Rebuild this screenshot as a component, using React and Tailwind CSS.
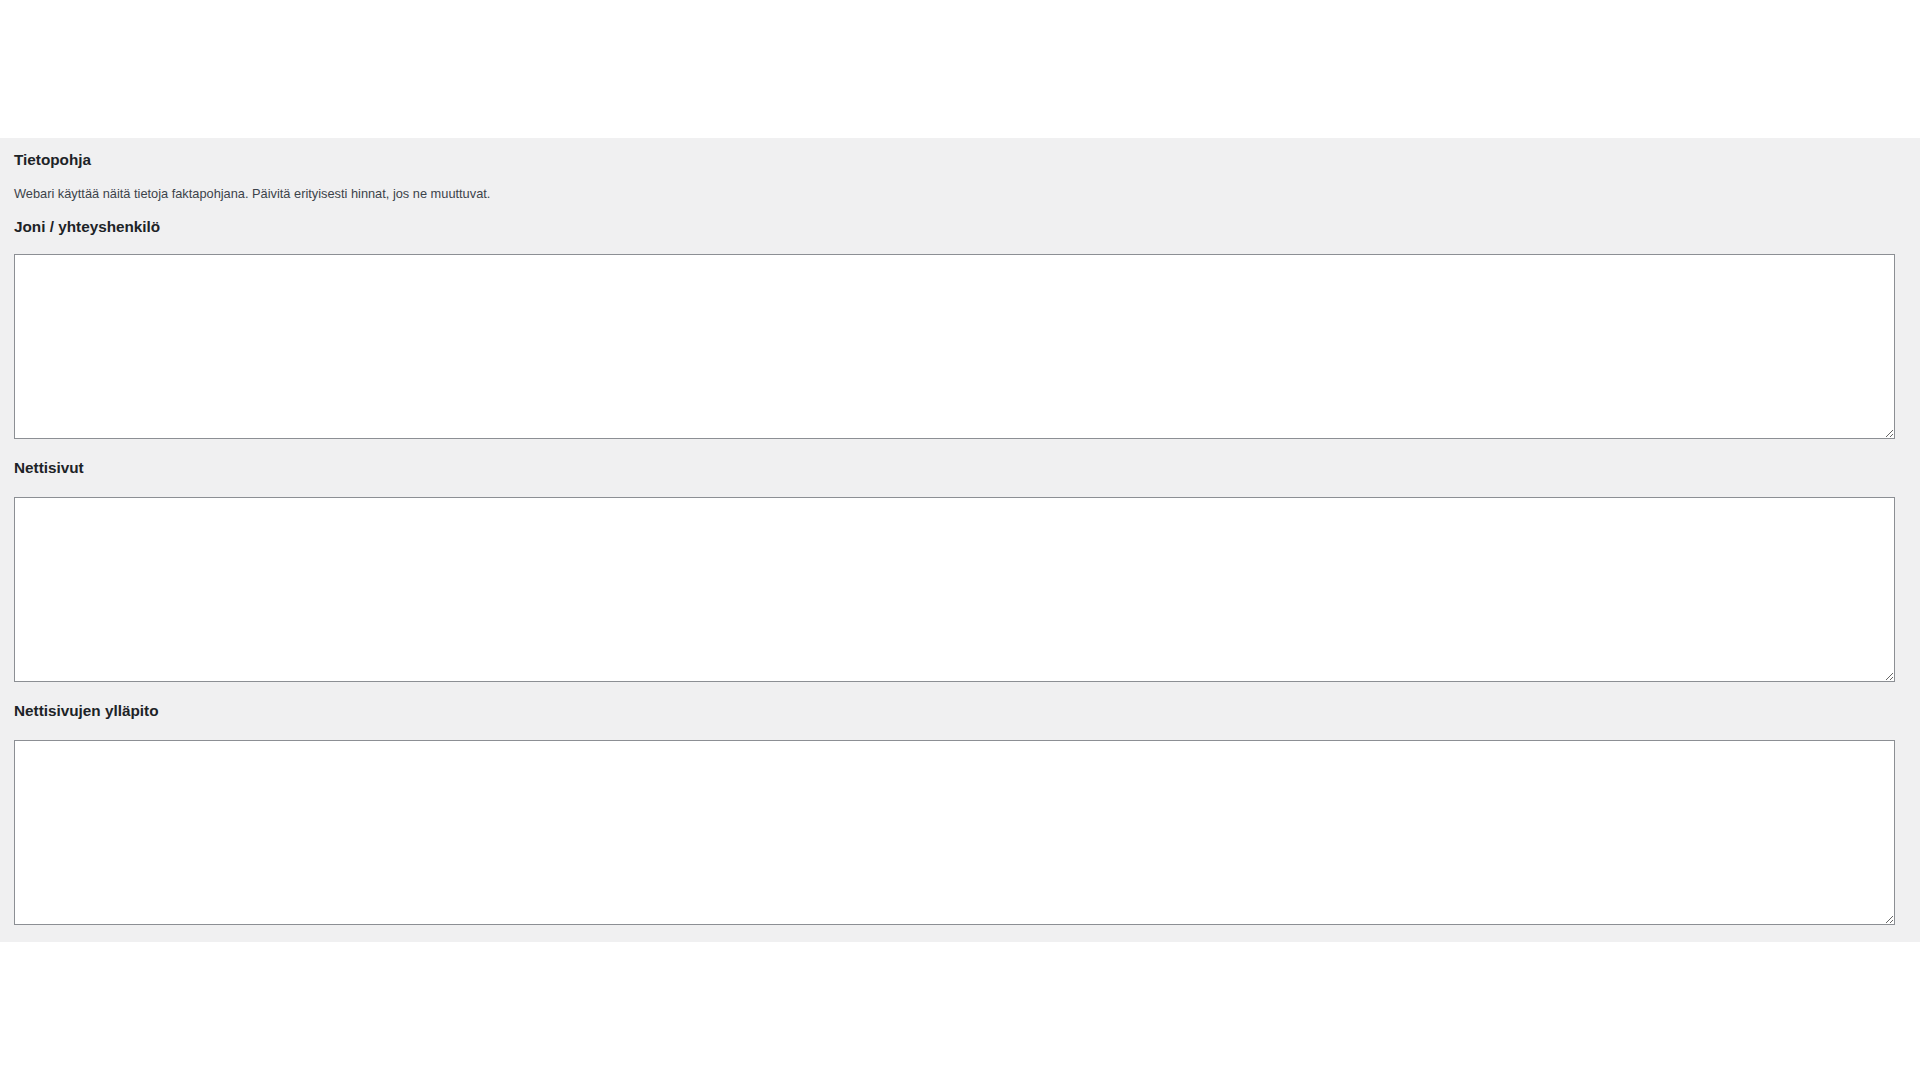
const fields = ['Joni / yhteyshenkilö', 'Nettisivut', 'Nettisivujen ylläpito'];

const Field = ({ label, first }) => (
  <div className={first ? 'mt-[12px]' : 'mt-[17px]'}>
    <label className="block text-[15.3px] leading-[24px] font-semibold text-[#1d2327]">{label}</label>
    <textarea
      className={`block w-full h-[185px] bg-white border border-[#8c8f94] rounded-none ${first ? 'mt-[15px]' : 'mt-[17px]'}`}
    />
  </div>
);

export default function App() {
  return (
    <div className="min-h-[1080px] bg-white" style={{ fontFamily: '"Liberation Sans", Arial, sans-serif' }}>
      <div className="h-[138px]" />
      <section className="bg-[#f0f0f1] pl-[14px] pr-[25px] pt-[10px] pb-[17px]">
        <h2 className="text-[15.3px] leading-[24px] font-semibold text-[#1d2327]">Tietopohja</h2>
        <p className="mt-[13px] text-[12.8px] leading-[18px] text-[#3c434a]">
          Webari käyttää näitä tietoja faktapohjana. Päivitä erityisesti hinnat, jos ne muuttuvat.
        </p>
        {fields.map((f, i) => (
          <Field key={f} label={f} first={i === 0} />
        ))}
      </section>
    </div>
  );
}
